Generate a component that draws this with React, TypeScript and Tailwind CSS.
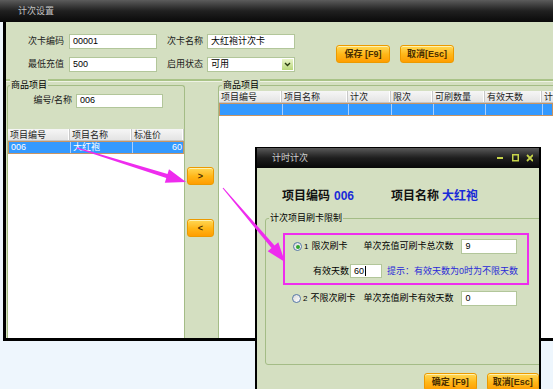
import React from "react";

const GREEN = "bg-[#d4dfc1]";

const Field = ({ w, h = "h-[15px]", value, caret }: { w: string; h?: string; value: string; caret?: boolean }) => (
  <div className={`${w} ${h} bg-white border border-[#b2c69a] px-[3px] text-[9px] leading-[13px] text-black flex items-center`}>
    {value}
    {caret && <span className="w-px h-[10px] bg-black ml-px" />}
  </div>
);

const OrangeButton = ({ label, w = "w-[54px]" }: { label: string; w?: string }) => (
  <button
    type="button"
    className={`${w} h-[18px] rounded-[3px] border border-[#ec9a00] bg-linear-to-b from-[#ffd850] via-[#ffb818] to-[#ff9d00] text-[9px] font-bold text-[#4a2e00] leading-[16px] shadow-[inset_0_1px_0_#fff2b0]`}
  >
    {label}
  </button>
);

const Label = ({ text, w }: { text: string; w: string }) => (
  <span className={`${w} text-right text-[9px] leading-[15px] text-[#1a1a1a]`}>{text}</span>
);

type Col = { title: string; w: string; value: string; right?: boolean };

const Grid = ({ cols }: { cols: Col[] }) => (
  <div className="flex-1 min-w-0 flex flex-col bg-white overflow-hidden">
    <div className="flex h-[12px] bg-linear-to-b from-[#f6f6f6] to-[#e4e4e4] border-b border-[#c4c4c4] shrink-0">
      {cols.map((c) => (
        <div
          key={c.title}
          className={`${c.w} shrink-0 px-[2px] text-[9px] leading-[12px] text-[#222] border-r border-[#c9c9c9] shadow-[inset_-1px_0_0_#fff] whitespace-nowrap overflow-hidden`}
        >
          {c.title}
        </div>
      ))}
    </div>
    <div className="flex h-[13px] bg-[#3399ff] border border-[#c79463] shrink-0">
      {cols.map((c) => (
        <div
          key={c.title}
          className={`${c.w} shrink-0 px-[2px] text-[9px] leading-[11px] text-white border-r border-[#a9d0ff] ${c.right ? "text-right" : ""}`}
        >
          {c.value}
        </div>
      ))}
    </div>
  </div>
);

const Radio = ({ checked }: { checked?: boolean }) => (
  <span className="w-[9px] h-[9px] rounded-full border border-[#5577a8] bg-linear-to-br from-[#d8d8d8] to-white flex items-center justify-center shrink-0">
    {checked && <span className="w-[4px] h-[4px] rounded-full bg-[#2ea52e]" />}
  </span>
);

const leftCols: Col[] = [
  { title: "项目编号", w: "w-[62px]", value: "006" },
  { title: "项目名称", w: "w-[62px]", value: "大红袍" },
  { title: "标准价", w: "w-[52px]", value: "60", right: true },
];

const rightCols: Col[] = [
  { title: "项目编号", w: "w-[63px]", value: "" },
  { title: "项目名称", w: "w-[66px]", value: "" },
  { title: "计次", w: "w-[43px]", value: "" },
  { title: "限次", w: "w-[42px]", value: "" },
  { title: "可刷数量", w: "w-[52px]", value: "" },
  { title: "有效天数", w: "w-[57px]", value: "" },
  { title: "计", w: "w-[40px]", value: "" },
];

export default function App() {
  return (
    <div className="relative w-[553px] h-[389px] overflow-hidden bg-[#eef6fd] font-['Liberation_Sans','Noto_Sans_CJK_SC',sans-serif]">
      {/* main window title */}
      <div className="h-[22px] bg-linear-to-b from-[#5c5c5c] via-[#202020] to-[#0a0a0a] pl-[18px] text-[9px] leading-[22px] text-[#c4c4c4]">
        计次设置
      </div>

      {/* main window body */}
      <div className={`ml-[3px] h-[319px] border-l-[3px] border-b-[3px] border-black ${GREEN} flex flex-col`}>
        {/* form */}
        <div className="h-[59px] shrink-0 flex items-start border-b-2 border-[#a9c387] shadow-[0_1px_0_#eef3e4]">
          <div className="flex flex-col gap-[8px] pt-[12px]">
            <div className="flex items-center">
              <Label text="次卡编码" w="w-[58px]" />
              <div className="ml-[5px] flex"><Field w="w-[88px]" value="00001" /></div>
              <Label text="次卡名称" w="w-[46px]" />
              <div className="ml-[4px] flex"><Field w="w-[88px]" value="大红袍计次卡" /></div>
            </div>
            <div className="flex items-center">
              <Label text="最低充值" w="w-[58px]" />
              <div className="ml-[5px] flex"><Field w="w-[88px]" value="500" /></div>
              <Label text="启用状态" w="w-[46px]" />
              <div className="ml-[4px] w-[88px] h-[15px] bg-white border border-[#b2c69a] flex items-center">
                <span className="flex-1 px-[3px] text-[9px] leading-[13px]">可用</span>
                <span className="w-[11px] h-[11px] mr-px bg-linear-to-b from-[#eaf5c8] to-[#b9d77a] flex items-center justify-center">
                  <svg width="7" height="5" viewBox="0 0 7 5">
                    <path d="M1 1 L3.5 3.5 L6 1" fill="none" stroke="#2a3a10" strokeWidth="1.4" />
                  </svg>
                </span>
              </div>
            </div>
          </div>
          <div className="ml-[41px] flex gap-[10px] pt-[23px]">
            <OrangeButton label="保存 [F9]" />
            <OrangeButton label="取消[Esc]" />
          </div>
        </div>

        {/* lower area */}
        <div className="flex-1 flex min-w-0">
          <div className="relative shrink-0 ml-px mt-[4px] w-[178px] border-t border-x border-[#a4bc86] rounded-t-[3px] flex flex-col">
            <span className={`absolute -top-[7px] left-[2px] px-px ${GREEN} text-[9px] leading-[12px]`}>商品项目</span>
            <div className="mt-[7px] flex items-center">
              <Label text="编号/名称" w="w-[64px]" />
              <div className="ml-[4px] flex"><Field w="w-[87px]" h="h-[14px]" value="006" /></div>
            </div>
            <div className="mt-[21px] flex-1 flex">
              <Grid cols={leftCols} />
            </div>
          </div>

          <div className="w-[33px] shrink-0 pl-[2px] flex flex-col">
            <div className="mt-[86px] flex"><OrangeButton label=">" w="w-[27px]" /></div>
            <div className="mt-[34px] flex"><OrangeButton label="<" w="w-[27px]" /></div>
          </div>

          <div className="relative min-w-0 mt-[4px] flex-1 border-t border-l border-[#a4bc86] rounded-tl-[3px] flex flex-col">
            <span className={`absolute -top-[7px] left-[3px] px-px ${GREEN} text-[9px] leading-[12px]`}>商品项目</span>
            <div className="mt-[5px] flex-1 flex overflow-hidden">
              <Grid cols={rightCols} />
            </div>
          </div>
        </div>
      </div>

      {/* dialog window */}
      <div className={`absolute left-[255px] top-[147px] w-[286px] h-[250px] border-x-2 border-t border-black ${GREEN} flex flex-col overflow-hidden`}>
        <div className="h-[20px] shrink-0 bg-linear-to-b from-[#5a5a5a] via-[#1e1e1e] to-[#080808] flex items-center pl-[15px] pr-[6px]">
          <span className="flex-1 text-[9px] leading-[20px] text-[#cfcfcf]">计时计次</span>
          <svg width="36" height="8" viewBox="0 0 36 8">
            <rect x="0" y="3" width="6" height="2" fill="#c6d44a" />
            <rect x="15.75" y="0.75" width="5.5" height="6" fill="none" stroke="#c6d44a" strokeWidth="1.5" />
            <path d="M30 1 L36 7 M36 1 L30 7" stroke="#c6d44a" strokeWidth="1.8" />
          </svg>
        </div>

        <div className="flex flex-col">
          <div className="pt-[21px] pl-[25px] flex items-center h-[35px] text-[12px] font-bold leading-[14px]">
            <span className="text-[#111]">项目编码</span>
            <span className="ml-[4px] text-[#1a2bd8]">006</span>
            <span className="ml-[37px] text-[#111]">项目名称</span>
            <span className="ml-[3px] text-[#1a2bd8]">大红袍</span>
          </div>

          <div className="relative ml-[8px] mt-[15px] w-[290px] h-[147px] border border-[#a4bc86] rounded-[3px] flex flex-col">
            <span className={`absolute -top-[7px] left-[3px] px-px ${GREEN} text-[9px] leading-[12px]`}>计次项目刷卡限制</span>

            <div className="ml-[17px] mt-[14px] w-[246px] h-[52px] border-2 border-[#ee2cee] flex flex-col">
              <div className="pt-[4px] pl-[8px] flex items-center h-[19px]">
                <Radio checked />
                <span className="ml-[2px] text-[8px] leading-[15px]">1</span>
                <span className="ml-[3px] text-[9px] leading-[15px]">限次刷卡</span>
                <span className="ml-[16px] text-[9px] leading-[15px]">单次充值可刷卡总次数</span>
                <div className="ml-[8px] flex"><Field w="w-[56px]" value="9" /></div>
              </div>
              <div className="mt-[10px] pl-[28px] flex items-center">
                <span className="text-[9px] leading-[14px]">有效天数</span>
                <div className="ml-px flex"><Field w="w-[32px]" h="h-[14px]" value="60" caret /></div>
                <span className="ml-[5px] text-[9px] leading-[14px] text-[#2a2ad8]">提示：有效天数为0时为不限天数</span>
              </div>
            </div>

            <div className="mt-[6px] pl-[26px] flex items-center">
              <Radio />
              <span className="ml-[2px] text-[8px] leading-[15px]">2</span>
              <span className="ml-[3px] text-[9px] leading-[15px]">不限次刷卡</span>
              <span className="ml-[8px] text-[9px] leading-[15px]">单次充值刷卡有效天数</span>
              <div className="ml-[8px] flex"><Field w="w-[56px]" value="0" /></div>
            </div>
          </div>

          <div className="mt-[8px] pl-[167px] flex gap-[10px]">
            <OrangeButton label="确定 [F9]" />
            <OrangeButton label="取消[Esc]" />
          </div>
        </div>
      </div>

      {/* annotation arrows */}
      <svg className="absolute inset-0 pointer-events-none" width="553" height="389" viewBox="0 0 553 389">
        <polygon
          fill="#ee2cee"
          points="77.2,147.4 167.5,174.1 169,169.3 186,182 164.8,182.7 166.3,177.9 76.8,148.6"
        />
        <polygon
          fill="#ee2cee"
          points="223.4,187.7 274.5,245.5 278.3,242.3 285,262 267.7,251.3 271.5,248.1 222.6,188.3"
        />
      </svg>
    </div>
  );
}
